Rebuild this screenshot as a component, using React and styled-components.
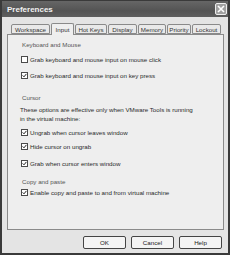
import React from "react";
import styled, { createGlobalStyle } from "styled-components";

const Global = createGlobalStyle`
  html, body { margin: 0; padding: 0; background: #d8d8d8; }
  body { font-family: "Liberation Sans", Arial, sans-serif; }
`;

const Window = styled.div`
  width: 230px;
  height: 255px;
  box-sizing: border-box;
  border: 2px solid #3a3a3a;
  border-top-width: 1px;
  background: #e4e4e4;
  display: flex;
  flex-direction: column;
`;

const TitleBar = styled.div`
  height: 16px;
  flex: none;
  background: linear-gradient(180deg, #666 0%, #545454 60%, #5e5e5e 100%);
  display: flex;
  align-items: center;
  justify-content: space-between;
  padding: 0 1px 0 5px;
`;

const Title = styled.div`
  color: #f2f2f2;
  font-size: 8px;
  font-weight: bold;
`;

const Close = styled.div`
  width: 12px;
  height: 12px;
  box-sizing: border-box;
  border: 1px solid #eee;
  border-radius: 2px;
  background: #a0a0a0;
  display: flex;
  align-items: center;
  justify-content: center;
`;

const Body = styled.div`
  flex: 1;
  display: flex;
  flex-direction: column;
  padding: 5px 4px 0 5px;
`;

const Tabs = styled.div`
  display: flex;
  align-items: flex-end;
  height: 12px;
  padding-left: 4px;
  gap: 1px;
`;

const Tab = styled.div`
  width: ${p => p.$w}px;
  height: ${p => (p.$active ? 12 : 10)}px;
  box-sizing: border-box;
  border: 1px solid #8a8a8a;
  border-bottom: ${p => (p.$active ? "none" : "1px solid #8a8a8a")};
  border-radius: 2px 2px 0 0;
  background: ${p => (p.$active ? "#efefef" : "#e9e9e9")};
  font-size: 6.2px;
  color: #333;
  display: flex;
  align-items: center;
  justify-content: center;
  white-space: nowrap;
  margin-bottom: ${p => (p.$active ? "-1px" : "0")};
  position: relative;
`;

const Panel = styled.div`
  height: 196px;
  box-sizing: border-box;
  border: 1px solid #8a8a8a;
  background: #eeeeee;
  display: flex;
  flex-direction: column;
  padding: 5px 8px 0 13px;
  color: #333;
  font-size: 6.2px;
`;

const GroupLabel = styled.div`
  height: 9px;
  line-height: 9px;
  color: #555;
  margin: ${p => p.$mt}px 0 ${p => p.$mb}px 1px;
`;

const Row = styled.div`
  display: flex;
  align-items: center;
  gap: 2px;
  height: 8px;
  margin-bottom: ${p => p.$mb}px;
`;

const Box = styled.div`
  width: 7px;
  height: 7px;
  box-sizing: border-box;
  border: 1px solid #4a4a4a;
  background: #fff;
  display: flex;
  align-items: center;
  justify-content: center;
  flex: none;
`;

const Text = styled.div`
  white-space: nowrap;
  color: #2a2a2a;
`;

const Para = styled.div`
  line-height: 9px;
  color: #2a2a2a;
  margin: 0 0 5px -1px;
`;

const Buttons = styled.div`
  display: flex;
  justify-content: flex-end;
  gap: 5px;
  margin: 6px 2px 0 0;
`;

const Button = styled.div`
  width: 43px;
  height: 13px;
  box-sizing: border-box;
  border: 1px solid #444;
  border-radius: 2px;
  background: #f4f4f4;
  font-size: 6.2px;
  color: #222;
  display: flex;
  align-items: center;
  justify-content: center;
`;

const Check = () => (
  <svg width="5" height="5" viewBox="0 0 5 5">
    <path d="M0.6 2.4 L2 3.8 L4.4 0.9" fill="none" stroke="#222" strokeWidth="1" />
  </svg>
);

const CheckRow = ({ checked, children, mb }) => (
  <Row $mb={mb}>
    <Box>{checked && <Check />}</Box>
    <Text>{children}</Text>
  </Row>
);

const tabs = [
  ["Workspace", 39],
  ["Input", 23],
  ["Hot Keys", 32],
  ["Display", 29],
  ["Memory", 28],
  ["Priority", 24],
  ["Lockout", 29],
];

export default function App() {
  return (
    <>
      <Global />
      <Window>
        <TitleBar>
          <Title>Preferences</Title>
          <Close>
            <svg width="8" height="8" viewBox="0 0 8 8">
              <path d="M1 1 L7 7 M7 1 L1 7" stroke="#fff" strokeWidth="1.6" />
            </svg>
          </Close>
        </TitleBar>
        <Body>
          <Tabs>
            {tabs.map(([t, w]) => (
              <Tab key={t} $w={w} $active={t === "Input"}>
                {t}
              </Tab>
            ))}
          </Tabs>
          <Panel>
            <GroupLabel $mt={0} $mb={6}>Keyboard and Mouse</GroupLabel>
            <CheckRow mb={8}>Grab keyboard and mouse input on mouse click</CheckRow>
            <CheckRow checked mb={0}>Grab keyboard and mouse input on key press</CheckRow>
            <GroupLabel $mt={14} $mb={3}>Cursor</GroupLabel>
            <Para>
              These options are effective only when VMware Tools is running
              <br />
              in the virtual machine:
            </Para>
            <CheckRow checked mb={6}>Ungrab when cursor leaves window</CheckRow>
            <CheckRow checked mb={9}>Hide cursor on ungrab</CheckRow>
            <CheckRow checked mb={0}>Grab when cursor enters window</CheckRow>
            <GroupLabel $mt={10} $mb={2}>Copy and paste</GroupLabel>
            <CheckRow checked mb={0}>Enable copy and paste to and from virtual machine</CheckRow>
          </Panel>
          <Buttons>
            <Button>OK</Button>
            <Button>Cancel</Button>
            <Button>Help</Button>
          </Buttons>
        </Body>
      </Window>
    </>
  );
}
